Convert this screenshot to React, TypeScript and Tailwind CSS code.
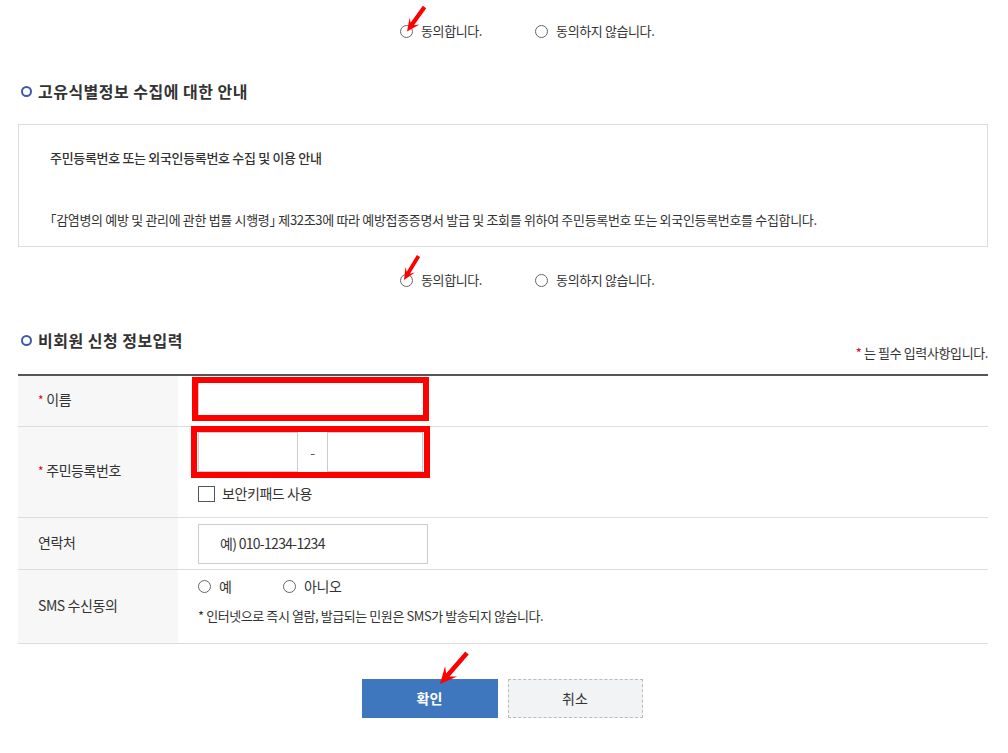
import React from "react";

function Arrow({ tip, tail, head = 12, half = 6, shaft = 1.8 }: { tip: [number, number]; tail: [number, number]; head?: number; half?: number; shaft?: number }) {
  const [tx, ty] = tip;
  const [bx, by] = tail;
  const dx = bx - tx, dy = by - ty;
  const len = Math.hypot(dx, dy);
  const ux = dx / len, uy = dy / len;
  const px = -uy, py = ux;
  const hb = [tx + ux * head, ty + uy * head];
  const notch = [tx + ux * head * 0.7, ty + uy * head * 0.7];
  const pts = [
    [tx, ty],
    [hb[0] + px * half, hb[1] + py * half],
    [notch[0] + px * shaft, notch[1] + py * shaft],
    [bx + px * shaft, by + py * shaft],
    [bx - px * shaft, by - py * shaft],
    [notch[0] - px * shaft, notch[1] - py * shaft],
    [hb[0] - px * half, hb[1] - py * half],
  ];
  const minX = Math.min(tx, bx) - 8, minY = Math.min(ty, by) - 8;
  const w = Math.abs(bx - tx) + 16, h = Math.abs(by - ty) + 16;
  return (
    <svg
      className="absolute pointer-events-none"
      style={{ left: minX, top: minY, width: w, height: h }}
      viewBox={`${minX} ${minY} ${w} ${h}`}
    >
      <polygon points={pts.map((p) => p.join(",")).join(" ")} fill="#ff0000" />
    </svg>
  );
}

function Radio({ label, className = "" }: { label: string; className?: string }) {
  return (
    <div className={"flex items-center " + className}>
      <span className="w-[13px] h-[13px] rounded-full border border-[#666] bg-white" />
      <span className="ml-[8px]">{label}</span>
    </div>
  );
}

function Heading({ children }: { children: React.ReactNode }) {
  return (
    <div className="flex items-center h-6 pl-[3px]">
      <span className="w-[11px] h-[11px] rounded-full border-[2.5px] border-[#3f5aa8]" />
      <span className="ml-[6px] text-[16px] font-bold text-[#333] tracking-[0.03em]">{children}</span>
    </div>
  );
}

function Star() {
  return <span className="text-[#e60012] text-[12px] mr-[3px]">*</span>;
}

export default function App() {
  return (
    <div className="relative w-[1008px] min-h-[753px] bg-white pl-[18px] pr-[20px] text-[#333] font-['Noto_Sans_CJK_KR',sans-serif]">
      {/* agree row 1 */}
      <div className="flex pt-[21px] pl-[382px] gap-[53px] text-[13px] h-[41px] items-center tracking-[-0.03em]">
        <Radio label="동의합니다." />
        <Radio label="동의하지 않습니다." />
      </div>

      <div className="mt-[38px]">
        <Heading>고유식별정보 수집에 대한 안내</Heading>
      </div>

      <div className="mt-[21px] h-[123px] border border-[#ddd] pl-[31px] text-[13px] tracking-[-0.025em] text-[#333] [font-feature-settings:'halt']">
        <div className="pt-[23px] font-medium leading-5">주민등록번호 또는 외국인등록번호 수집 및 이용 안내</div>
        <div className="mt-[42px] leading-5">
          「감염병의 예방 및 관리에 관한 법률 시행령」 제32조3에 따라 예방접종증명서 발급 및 조회를 위하여 주민등록번호 또는 외국인등록번호를 수집합니다.
        </div>
      </div>

      {/* agree row 2 */}
      <div className="flex mt-[23px] pl-[382px] gap-[53px] text-[13px] h-5 items-center tracking-[-0.03em]">
        <Radio label="동의합니다." />
        <Radio label="동의하지 않습니다." />
      </div>

      <div className="mt-[38px] flex justify-between h-[36px]">
        <div className="self-start">
          <Heading>비회원 신청 정보입력</Heading>
        </div>
        <div className="self-end text-[13px] leading-5 tracking-[-0.03em] text-[#333] pb-[1px]">
          <span className="text-[#e60012]">*</span> 는 필수 입력사항입니다.
        </div>
      </div>

      {/* table */}
      <div className="mt-[10px] border-t-2 border-[#555] text-[14px] tracking-[-0.03em]">
        <div className="grid grid-cols-[160px_1fr] h-[51px] border-b border-[#ddd]">
          <div className="bg-[#f7f7f7] flex items-center pl-[20px] pb-[3px]">
            <Star />이름
          </div>
          <div className="relative pl-[20px] pt-[6px]">
            <div className="w-[230px] h-[34px] border border-[#ccc] bg-white" />
            <div className="absolute left-[14px] top-[1px] w-[237px] h-[44px] border-[6px] border-[#ff0000]" />
          </div>
        </div>

        <div className="grid grid-cols-[160px_1fr] h-[91px] border-b border-[#ddd]">
          <div className="bg-[#f7f7f7] flex items-center pl-[20px] pb-[3px]">
            <Star />주민등록번호
          </div>
          <div className="relative pl-[20px] pt-[5px]">
            <div className="flex items-center">
              <div className="w-[100px] h-[40px] border border-[#ccc] bg-white" />
              <div className="w-[29px] text-center text-[#555]">-</div>
              <div className="w-[96px] h-[40px] border border-[#ccc] bg-white" />
            </div>
            <div className="flex items-center mt-[11px]">
              <span className="w-[17px] h-[16px] border border-[#555] bg-white" />
              <span className="ml-[7px]">보안키패드 사용</span>
            </div>
            <div className="absolute left-[13px] top-[-1px] w-[239px] h-[52px] border-[6px] border-[#ff0000]" />
          </div>
        </div>

        <div className="grid grid-cols-[160px_1fr] h-[52px] border-b border-[#ddd]">
          <div className="bg-[#f7f7f7] flex items-center pl-[20px] pb-[3px]">연락처</div>
          <div className="pl-[20px] pt-[6px]">
            <div className="w-[230px] h-[40px] border border-[#ccc] bg-white flex items-center pl-[21px] pb-[2px] text-[#333] tracking-[-0.05em]">
              예) 010-1234-1234
            </div>
          </div>
        </div>

        <div className="grid grid-cols-[160px_1fr] h-[74px] border-b border-[#ddd]">
          <div className="bg-[#f7f7f7] flex items-center pl-[20px] pb-[2px]">SMS 수신동의</div>
          <div className="pl-[20px] pt-[6px]">
            <div className="flex items-center h-5">
              <Radio label="예" className="w-[85px]" />
              <Radio label="아니오" />
            </div>
            <div className="mt-[10px] text-[13px] leading-5">* 인터넷으로 즉시 열람, 발급되는 민원은 SMS가 발송되지 않습니다.</div>
          </div>
        </div>
      </div>

      {/* buttons */}
      <div className="flex justify-center gap-[10px] mt-[35px] pr-[2px]">
        <button className="w-[136px] h-[39px] bg-[#3e77be] text-white text-[14px] font-bold">확인</button>
        <button className="w-[135px] h-[39px] bg-[#f2f3f5] border border-dashed border-[#bbb] text-[#333] text-[14px]">취소</button>
      </div>

      <Arrow tip={[406.5, 31.5]} tail={[424, 7]} head={13} half={6} shaft={2.1} />
      <Arrow tip={[403.5, 280]} tail={[418, 256]} head={12} half={5.5} shaft={1.9} />
      <Arrow tip={[440, 684]} tail={[467, 653]} head={17} half={8} shaft={2.3} />
    </div>
  );
}
